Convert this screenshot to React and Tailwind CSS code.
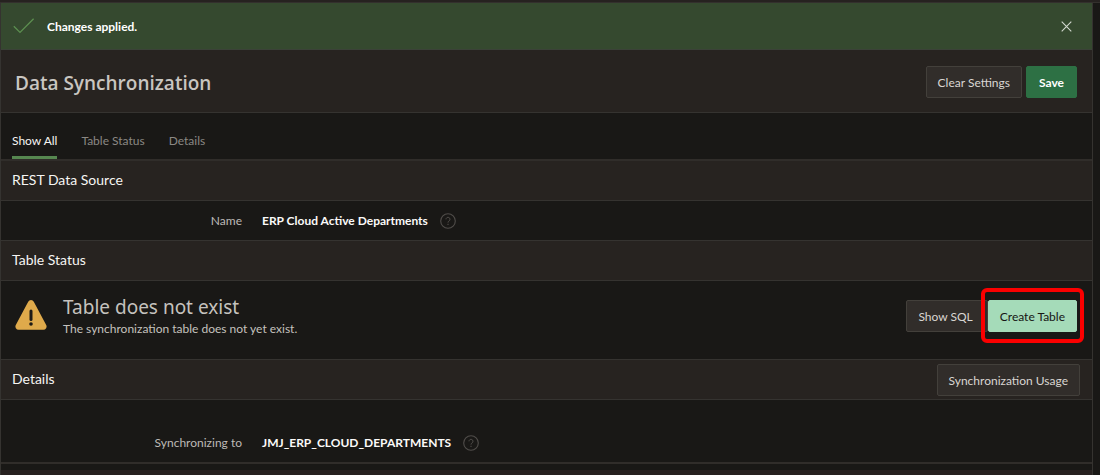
import React, { useState } from "react";

const tabs = ["Show All", "Table Status", "Details"];

function Button({ children, className = "" }) {
  return (
    <button
      type="button"
      className={`h-8 shrink-0 whitespace-nowrap rounded-xs border pt-0.5 text-[12px] leading-4 ${className}`}
    >
      {children}
    </button>
  );
}

function HelpButton({ label }) {
  return (
    <button type="button" aria-label={label} className="text-[#504d4a]">
      <svg width="16" height="16" viewBox="0 0 16 16" fill="none" stroke="currentColor">
        <circle cx="8" cy="8" r="7.3" strokeWidth="1.1" />
        <path d="M6 6.3a2 2 0 1 1 3.2 1.6C8.4 8.4 8 8.7 8 9.6" strokeWidth="1" />
        <path d="M8 10.8v1.2" strokeWidth="1.1" />
      </svg>
    </button>
  );
}

function SectionHeader({ title, children }) {
  return (
    <div className="flex h-[39px] items-center justify-between bg-[#272320] pl-[11px] pr-3">
      <h2 className="pb-0.5 text-[14px] leading-5 text-[#f6f5f3]">{title}</h2>
      {children}
    </div>
  );
}

function Field({ label, value, className = "" }) {
  return (
    <dl className={`flex items-center ${className}`}>
      <dt className="w-[241px] shrink-0 text-right text-[12px] leading-4 text-[#bdbab6]">{label}</dt>
      <dd className="ml-5 flex items-center gap-3 text-[12px] leading-4 font-bold text-[#fbfaf9]">
        {value}
        <HelpButton label={`Help for ${label}`} />
      </dd>
    </dl>
  );
}

export default function App() {
  const [activeTab, setActiveTab] = useState("Show All");
  const [showMessage, setShowMessage] = useState(true);

  return (
    <div className="min-h-screen bg-[#191816] font-['Lato','Open_Sans',sans-serif]">
      <div className="h-[3px] border-b border-[#33302d] bg-[#262220]" />

      <main className="mr-[7px] border-x border-[#353330]">
        {showMessage && (
          <div role="status" className="flex h-[47px] items-center border-b border-[#3b4238] bg-[#35492f] pl-3 pr-5">
            <svg width="22" height="16" viewBox="0 0 22 16" fill="none" stroke="#5c8f50" strokeWidth="1.3">
              <path d="M.8 8.2 7 14.4 20.6 .8" />
            </svg>
            <p className="ml-3 flex-1 pt-0.5 text-[12px] leading-4 font-bold text-white">Changes applied.</p>
            <button type="button" aria-label="Close" onClick={() => setShowMessage(false)}>
              <svg width="11" height="11" viewBox="0 0 11 11" stroke="#d2d8cf" strokeWidth="1.1">
                <path d="M.7 .7l9.6 9.6M10.3 .7L.7 10.3" />
              </svg>
            </button>
          </div>
        )}

        <header className="flex h-[63px] items-center justify-between border-b border-[#353330] bg-[#272320] pt-0.5 pl-[14px] pr-[15px]">
          <h1 className="pt-0.5 font-['Open_Sans',sans-serif] text-[19px] leading-6 font-semibold text-[#c9c6c1]">
            Data Synchronization
          </h1>
          <div className="flex gap-1">
            <Button className="border-[#43403b] bg-[#312d2a] px-[11px] text-[#d9d6d2]">Clear Settings</Button>
            <Button className="border-[#2d7044] bg-[#2d7044] px-3 font-bold text-white">Save</Button>
          </div>
        </header>

        <nav className="flex h-12 items-end gap-6 border-b-2 border-[#302d2a] pl-[11px]">
          {tabs.map((tab) => (
            <button
              key={tab}
              type="button"
              onClick={() => setActiveTab(tab)}
              className={`border-b-3 pb-[7px] text-[12px] leading-4 ${
                tab === activeTab ? "border-[#568750] text-[#f6f5f3]" : "border-transparent text-[#8b8884]"
              }`}
            >
              {tab}
            </button>
          ))}
        </nav>

        <section>
          <SectionHeader title="REST Data Source" />
          <Field
            label="Name"
            value="ERP Cloud Active Departments"
            className="h-[41px] border-y border-[#353330]"
          />
        </section>

        <section>
          <SectionHeader title="Table Status" />
          <div className="flex h-20 items-start border-y border-[#353330] pl-[14px] pr-[15px]">
            <svg className="mt-[19px]" width="32" height="30" viewBox="0 0 32 30">
              <path
                d="M13.2 1.7a3.2 3.2 0 0 1 5.6 0L31.2 25a3.2 3.2 0 0 1-2.8 4.7H3.6A3.2 3.2 0 0 1 .8 25z"
                fill="#dfaa4b"
              />
              <path d="M16 11v8.4" stroke="#1d1a16" strokeWidth="3" strokeLinecap="round" />
              <circle cx="16" cy="24" r="1.8" fill="#1d1a16" />
            </svg>
            <div className="ml-4 mt-[14px] flex-1 text-[#c5c2be]">
              <h3 className="font-['Noto_Sans',sans-serif] text-[19px] leading-6">Table does not exist</h3>
              <p className="text-[12px] leading-5">The synchronization table does not yet exist.</p>
            </div>
            <div className="mt-[19px] flex">
              <Button className="border-[#43403b] bg-[#312d2a] pl-[11px] pr-[14px] text-[#d9d6d2]">Show SQL</Button>
              <div className="relative">
                <Button className="border-[#a5dbb9] bg-[#a5dbb9] px-[11px] text-[#161513]">Create Table</Button>
                <span className="pointer-events-none absolute -inset-x-[7px] -top-3 -bottom-[11px] rounded-md border-4 border-[#fb0000]" />
              </div>
            </div>
          </div>
        </section>

        <section>
          <SectionHeader title="Details">
            <Button className="border-[#43403b] bg-[#312d2a] px-[11px] text-[#d9d6d2]">Synchronization Usage</Button>
          </SectionHeader>
          <Field
            label="Synchronizing to"
            value="JMJ_ERP_CLOUD_DEPARTMENTS"
            className="border-t border-b-2 border-t-[#353330] border-b-[#302d2a] pt-[35px] pb-[11px]"
          />
        </section>

        <footer className="mt-[6px] h-[5px] bg-[#272120]" />
      </main>
    </div>
  );
}
